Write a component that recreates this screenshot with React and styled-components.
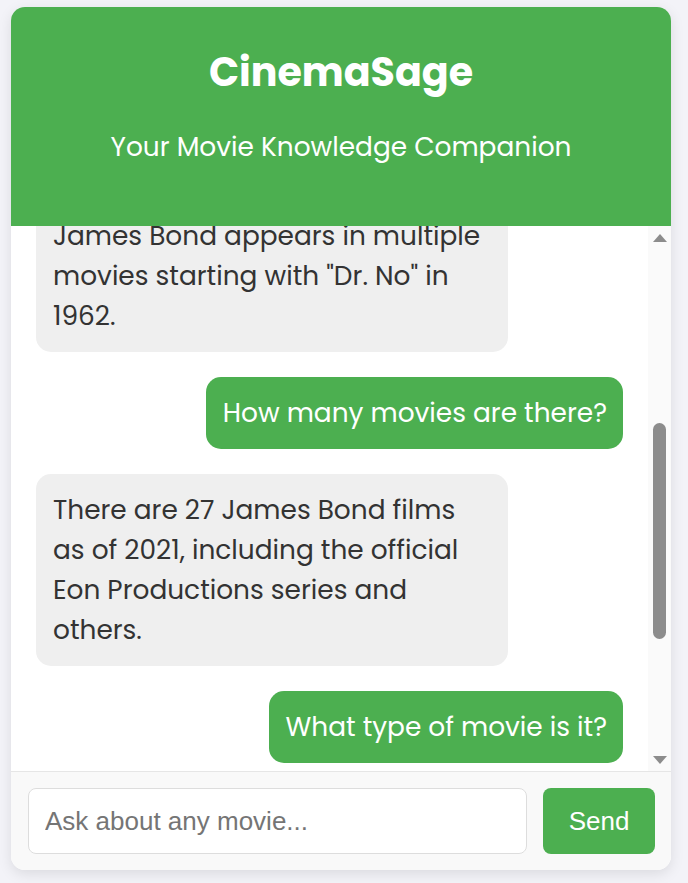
import React, { useLayoutEffect, useRef, useState } from "react";
import styled, { createGlobalStyle } from "styled-components";

const GlobalStyle = createGlobalStyle`
  html, body {
    margin: 0;
    padding: 0;
    background: #f3f3f8;
  }
  body {
    font-family: "Poppins", "Open Sans", "Noto Sans", sans-serif;
  }
`;

const green = "#4caf50";
const grey = "#8c8c8c";

const Page = styled.div`
  padding: 7px 17px 13px 11px;
`;

const Card = styled.div`
  display: flex;
  flex-direction: column;
  height: 863px;
  background: #ffffff;
  border-radius: 14px;
  overflow: hidden;
  box-shadow: 0 4px 14px rgba(0, 0, 0, 0.1);
`;

const Header = styled.header`
  flex: none;
  height: 219px;
  box-sizing: border-box;
  padding-top: 41px;
  background: ${green};
  color: #ffffff;
  text-align: center;
`;

const Title = styled.h1`
  margin: 0;
  font-size: 39.6px;
  font-weight: 700;
  line-height: 48px;
`;

const Subtitle = styled.p`
  margin: 33px 0 0;
  font-size: 26.4px;
  font-weight: 400;
  line-height: 36px;
`;

const ChatBody = styled.div`
  flex: 1;
  display: flex;
  min-height: 0;
`;

const Messages = styled.div`
  flex: 1;
  display: flex;
  flex-direction: column;
  gap: 25px;
  padding: 25px;
  overflow-y: scroll;
  scrollbar-width: none;
  &::-webkit-scrollbar {
    display: none;
  }
`;

const ScrollRail = styled.div`
  flex: none;
  width: 23px;
  display: flex;
  flex-direction: column;
  background: #fafafa;
`;

const ArrowButton = styled.div`
  flex: none;
  height: 23px;
  display: flex;
  align-items: center;
  justify-content: center;
  &::before {
    content: "";
    width: 0;
    height: 0;
    border-left: 7.5px solid transparent;
    border-right: 7.5px solid transparent;
    ${(p) =>
      p.$down
        ? `border-top: 8px solid ${grey};`
        : `border-bottom: 8px solid ${grey};`}
  }
`;

const Track = styled.div`
  flex: 1;
  position: relative;
`;

const Thumb = styled.div`
  position: absolute;
  left: 5px;
  right: 5px;
  border-radius: 7px;
  background: ${grey};
`;

const Bubble = styled.div`
  max-width: calc(80% + 2px);
  box-sizing: border-box;
  padding: ${(p) => (p.$user ? "16px 16px 16px 17px" : "16px 19px 16px 17px")};
  border-radius: 15px;
  font-size: 26.4px;
  line-height: 40px;
  align-self: ${(p) => (p.$user ? "flex-end" : "flex-start")};
  background: ${(p) => (p.$user ? green : "#efefef")};
  color: ${(p) => (p.$user ? "#ffffff" : "#333333")};
`;

const InputBar = styled.form`
  flex: none;
  display: flex;
  gap: 16px;
  padding: 16px 16px 16px 17px;
  background: #f9f9f9;
  border-top: 1px solid #e6e6e6;
`;

const TextInput = styled.input`
  flex: 1;
  height: 66px;
  box-sizing: border-box;
  padding: 0 16px;
  border: 1px solid #dddddd;
  border-radius: 8px;
  background: #ffffff;
  font-family: "Liberation Sans", Arial, sans-serif;
  font-size: 26px;
  color: #333;
  outline: none;
  &::placeholder {
    color: #757575;
  }
`;

const SendButton = styled.button`
  flex: none;
  width: 112px;
  height: 66px;
  border: none;
  border-radius: 8px;
  background: ${green};
  color: #ffffff;
  font-family: "Liberation Sans", Arial, sans-serif;
  font-size: 26px;
  cursor: pointer;
`;

const messages = [
  { user: false, text: "Hello! I'm CinemaSage." },
  { user: true, text: "Hi there!" },
  { user: false, text: "Which movie interests you?" },
  { user: true, text: "Tell me about James Bond" },
  {
    user: false,
    text: 'James Bond appears in multiple movies starting with "Dr. No" in 1962.',
    anchor: true,
  },
  { user: true, text: "How many movies are there?" },
  {
    user: false,
    text: "There are 27 James Bond films as of 2021, including the official Eon Productions series and others.",
  },
  { user: true, text: "What type of movie is it?" },
  {
    user: false,
    text: "James Bond films are spy action thrillers, packed with gadgets, car chases, glamorous villains and exotic locations around the world.",
  },
];

export default function App() {
  const listRef = useRef(null);
  const anchorRef = useRef(null);
  const trackRef = useRef(null);
  const [thumb, setThumb] = useState({ top: 0, height: 0 });

  const updateThumb = () => {
    const list = listRef.current;
    const track = trackRef.current;
    if (!list || !track) return;
    const h = track.clientHeight;
    setThumb({
      top: (list.scrollTop / list.scrollHeight) * h,
      height: (list.clientHeight / list.scrollHeight) * h,
    });
  };

  useLayoutEffect(() => {
    const list = listRef.current;
    const anchor = anchorRef.current;
    if (!list || !anchor) return;
    const offset =
      anchor.getBoundingClientRect().top - list.getBoundingClientRect().top;
    list.scrollTop += offset + 26;
    updateThumb();
  }, []);

  return (
    <Page>
      <GlobalStyle />
      <Card>
        <Header>
          <Title>CinemaSage</Title>
          <Subtitle>Your Movie Knowledge Companion</Subtitle>
        </Header>
        <ChatBody>
          <Messages ref={listRef} onScroll={updateThumb}>
            {messages.map((m, i) => (
              <Bubble key={i} $user={m.user} ref={m.anchor ? anchorRef : null}>
                {m.text}
              </Bubble>
            ))}
          </Messages>
          <ScrollRail>
            <ArrowButton />
            <Track ref={trackRef}>
              <Thumb style={{ top: thumb.top, height: thumb.height }} />
            </Track>
            <ArrowButton $down />
          </ScrollRail>
        </ChatBody>
        <InputBar onSubmit={(e) => e.preventDefault()}>
          <TextInput placeholder="Ask about any movie..." />
          <SendButton type="submit">Send</SendButton>
        </InputBar>
      </Card>
    </Page>
  );
}
